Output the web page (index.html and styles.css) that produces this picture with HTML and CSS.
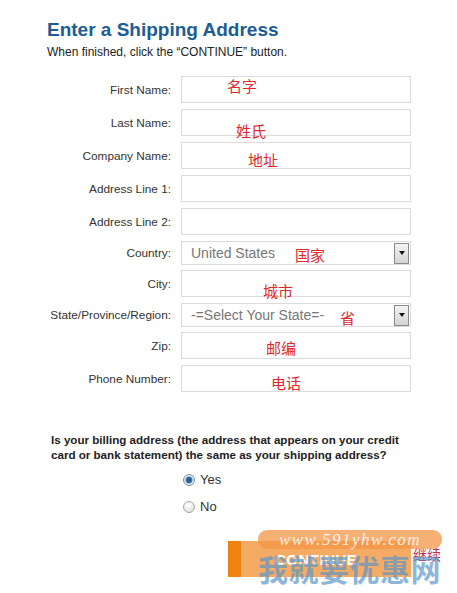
FILE: index.html
```html
<!DOCTYPE html>
<html lang="en">
<head>
  <meta charset="UTF-8">
  <title>Enter a Shipping Address</title>
  <link rel="stylesheet" href="styles.css">
</head>
<body>
  <div class="page">
    <div class="page-header">
      <h1>Enter a Shipping Address</h1>
      <p>When finished, click the &ldquo;CONTINUE&rdquo; button.</p>
    </div>

    <div class="address-form">
      <div class="form-row">
        <label>First Name:</label>
        <div class="field">
          <span class="note note-first">名字</span>
        </div>
      </div>
      <div class="form-row">
        <label>Last Name:</label>
        <div class="field">
          <span class="note note-last">姓氏</span>
        </div>
      </div>
      <div class="form-row">
        <label>Company Name:</label>
        <div class="field">
          <span class="note note-company">地址</span>
        </div>
      </div>
      <div class="form-row">
        <label>Address Line 1:</label>
        <div class="field"></div>
      </div>
      <div class="form-row">
        <label>Address Line 2:</label>
        <div class="field"></div>
      </div>
      <div class="form-row row-select">
        <label>Country:</label>
        <div class="field field-select">
          <span class="select-value">United States</span>
          <span class="select-arrow"></span>
          <span class="note note-country">国家</span>
        </div>
      </div>
      <div class="form-row">
        <label>City:</label>
        <div class="field">
          <span class="note note-city">城市</span>
        </div>
      </div>
      <div class="form-row row-select">
        <label>State/Province/Region:</label>
        <div class="field field-select">
          <span class="select-value">-=Select Your State=-</span>
          <span class="select-arrow"></span>
          <span class="note note-state">省</span>
        </div>
      </div>
      <div class="form-row">
        <label>Zip:</label>
        <div class="field">
          <span class="note note-zip">邮编</span>
        </div>
      </div>
      <div class="form-row">
        <label>Phone Number:</label>
        <div class="field">
          <span class="note note-phone">电话</span>
        </div>
      </div>
    </div>

    <div class="billing">
      <p class="billing-question">Is your billing address (the address that appears on your credit<br>card or bank statement) the same as your shipping address?</p>
      <div class="radio-list">
        <div class="radio-option">
          <span class="radio checked"></span>
          <span>Yes</span>
        </div>
        <div class="radio-option">
          <span class="radio"></span>
          <span>No</span>
        </div>
      </div>
    </div>

    <div class="actions">
      <div class="btn-continue">
        <span class="btn-edge"></span>
        <span class="btn-label">CONTINUE</span>
      </div>
      <span class="note-continue">继续</span>
    </div>

    <div class="watermark">
      <div class="watermark-url">www.591yhw.com</div>
      <div class="watermark-name">我就要优惠网</div>
    </div>
  </div>
</body>
</html>
```

FILE: styles.css
```css
* {
  margin: 0;
  padding: 0;
  box-sizing: border-box;
}

body {
  width: 457px;
  min-height: 593px;
  background: #fff;
  font-family: "Liberation Sans", Arial, "Noto Sans CJK SC", sans-serif;
  color: #333;
}

.page {
  position: relative;
  padding-top: 19px;
  min-height: 593px;
}

.page-header {
  padding-left: 47px;
}

.page-header h1 {
  font-size: 19px;
  font-weight: 700;
  line-height: 22px;
  color: #1b5d94;
}

.page-header p {
  font-size: 12px;
  line-height: 14px;
  margin-top: 4px;
  color: #222;
}

.address-form {
  margin-top: 17px;
  display: flex;
  flex-direction: column;
}

.form-row {
  display: flex;
  align-items: center;
  gap: 10px;
  margin-bottom: 6px;
}

.form-row.row-select {
  margin-bottom: 5px;
}

.form-row label {
  width: 171px;
  text-align: right;
  font-size: 11.8px;
  color: #333;
}

.field {
  position: relative;
  width: 230px;
  height: 27px;
  border: 1px solid #dcdcdc;
  background: #fff;
}

.field-select {
  height: 24px;
  display: flex;
  align-items: center;
  justify-content: space-between;
  padding-left: 9px;
  padding-right: 1px;
}

.select-value {
  font-size: 14px;
  color: #777;
}

.select-arrow {
  width: 15px;
  height: 21px;
  border: 1px solid #8a8a8a;
  background: linear-gradient(#f4f4f4, #d4d4d4);
  display: flex;
  align-items: center;
  justify-content: center;
}

.select-arrow::after {
  content: "";
  border-left: 3px solid transparent;
  border-right: 3px solid transparent;
  border-top: 4px solid #111;
}

/* red hand-written notes laid over the fields */
.note {
  position: absolute;
  font-family: "Noto Sans CJK SC", sans-serif;
  font-size: 15px;
  line-height: 16px;
  color: #e0282c;
  white-space: nowrap;
}

.note-first { left: 45px; top: 1px; }
.note-last { left: 54px; top: 13px; }
.note-company { left: 66px; top: 9px; }
.note-country { left: 113px; top: 5px; }
.note-city { left: 81px; top: 12px; }
.note-state { left: 158px; top: 6px; }
.note-zip { left: 84px; top: 7px; }
.note-phone { left: 89px; top: 9px; }

.billing {
  margin-top: 34px;
}

.billing-question {
  padding-left: 51px;
  font-size: 11.6px;
  font-weight: 700;
  line-height: 15px;
  color: #222;
  white-space: nowrap;
}

.radio-list {
  margin-top: 9px;
  padding-left: 183px;
  display: flex;
  flex-direction: column;
  gap: 10px;
}

.radio-option {
  display: flex;
  align-items: center;
  gap: 5px;
  font-size: 13px;
  line-height: 17px;
  color: #333;
}

.radio {
  width: 12px;
  height: 12px;
  border-radius: 50%;
  border: 1px solid #a8a8a8;
  background: radial-gradient(circle at 40% 35%, #fff, #d8d8d8);
}

.radio.checked {
  border-color: #7d94a8;
  background: radial-gradient(circle, #1c4f7c 0, #3b78ad 3px, #e8eef4 4px, #c9d4de 100%);
}

.actions {
  margin-top: 26px;
  padding-left: 228px;
  display: flex;
  align-items: flex-start;
}

.btn-continue {
  width: 183px;
  height: 36px;
  background: #f6ab65;
  display: flex;
  align-items: center;
}

.btn-edge {
  width: 13px;
  height: 100%;
  background: #ef8311;
}

.btn-label {
  margin-left: 34px;
  font-size: 15px;
  font-weight: 700;
  color: #fff;
  letter-spacing: 0.5px;
}

.note-continue {
  margin-left: 2px;
  margin-top: 5px;
  font-family: "Noto Sans CJK SC", sans-serif;
  font-size: 14px;
  line-height: 16px;
  color: #c0305a;
}

/* site watermark stamped over the button */
.watermark {
  position: absolute;
  left: 258px;
  top: 530px;
  width: 184px;
}

.watermark-url {
  height: 19px;
  border-radius: 9px;
  background: rgba(243, 150, 70, 0.75);
  font-family: "Liberation Serif", "DejaVu Serif", serif;
  font-style: italic;
  font-size: 17px;
  line-height: 19px;
  letter-spacing: 1.5px;
  text-align: center;
  color: rgba(255, 255, 255, 0.85);
}

.watermark-name {
  margin-top: 4px;
  font-family: "Noto Sans CJK SC", sans-serif;
  font-size: 30px;
  font-weight: 700;
  line-height: 31px;
  letter-spacing: 0.5px;
  color: rgba(90, 150, 200, 0.7);
  white-space: nowrap;
}
```
